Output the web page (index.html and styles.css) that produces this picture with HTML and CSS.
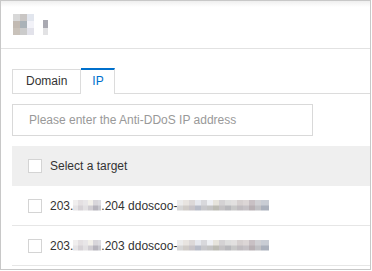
FILE: index.html
```html
<!DOCTYPE html>
<html lang="en">
<head>
    <meta charset="UTF-8">
    <meta name="viewport" content="width=device-width, initial-scale=1.0">
    <link rel="stylesheet" href="styles.css">
    <title>Select a target</title>
</head>
<body>
    <div class="panel">
        <div class="panelHead">
            <span class="titleBlur"></span><span class="titleBlurSmall"></span>
        </div>
        <div class="panelBody">
            <div class="tabs">
                <div class="tab">Domain</div>
                <div class="tab active">IP</div>
            </div>

            <input type="text" class="searchInput" placeholder="Please enter the Anti-DDoS IP address">

            <div class="targetList">
                <div class="row head">
                    <span class="check"></span>
                    <span class="label">Select a target</span>
                </div>
                <div class="row">
                    <span class="check"></span>
                    <span class="label">203.<span class="blur ipBlur"></span>.204 ddoscoo-<span class="blur nameBlur"></span></span>
                </div>
                <div class="row">
                    <span class="check"></span>
                    <span class="label">203.<span class="blur ipBlur"></span>.203 ddoscoo-<span class="blur nameBlur"></span></span>
                </div>
            </div>
        </div>
    </div>
</body>
</html>
```

FILE: styles.css
```css
body {
    margin: 0;
    background-color: white;
    font-family: "Liberation Sans", Arial, sans-serif;
    font-size: 12px;
    color: #333;
}

.panel {
    width: 369px;
    height: 268px;
    border: 1px solid #c8c8c8;
    overflow: hidden;
}

/* hlavicka s rozmazanym nazvom */
.panelHead {
    height: 48px;
    box-sizing: border-box;
    padding: 13px 12px 0;
    border-bottom: 1px solid #e2e2e2;
    background: linear-gradient(#efefef, #fff 6px);
    display: flex;
    align-items: flex-start;
}
.titleBlur {
    width: 21px;
    height: 21px;
    background:
        linear-gradient(to right, #d8d8d8 0 7px, #c9c6c4 7px 14px, #e2e6ee 14px) top / 100% 7px no-repeat,
        linear-gradient(to right, #c2bab2 0 7px, #aab2b8 7px 14px, #f2f2f8 14px) center / 100% 7px no-repeat,
        linear-gradient(to right, #c9c2ba 0 7px, #cbcbcb 7px 14px, #e2e2ea 14px) bottom / 100% 7px no-repeat;
}
.titleBlurSmall {
    width: 5px;
    height: 15px;
    margin: 6px 0 0 9px;
    background: linear-gradient(#a9a9b1 0 8px, #e2e2e4 8px);
}

.panelBody {
    padding: 19px 0 0 11px;
}

/* taby */
.tabs {
    display: flex;
    align-items: flex-end;
    border-bottom: 1px solid #dcdcdc;
}
.tab {
    height: 23px;
    line-height: 23px;
    padding: 0 13px;
    border: 1px solid #dcdcdc;
    border-bottom: none;
    color: #333;
}
.tab + .tab {
    border-left: none;
}
.tab.active {
    height: 23px;
    padding: 0 10px 0 11px;
    border-top: 2px solid #0070cc;
    margin-bottom: -1px;
    padding-bottom: 1px;
    background-color: white;
    color: #0070cc;
}

.searchInput {
    display: block;
    width: 301px;
    height: 32px;
    box-sizing: border-box;
    margin-top: 10px;
    padding: 0 16px;
    border: 1px solid #d9d9d9;
    font-family: inherit;
    font-size: 12px;
    color: #333;
    outline: none;
}
.searchInput::placeholder {
    color: #999;
}

/* zoznam cielov */
.targetList {
    margin-top: 10px;
}
.row {
    display: flex;
    align-items: center;
    height: 40px;
    box-sizing: border-box;
    padding-left: 16px;
    border-bottom: 1px solid #e6e6e6;
    white-space: nowrap;
}
.row.head {
    background-color: #efefef;
    border-bottom: none;
}
.check {
    width: 14px;
    height: 14px;
    box-sizing: border-box;
    border: 1px solid #d4d4d4;
    background-color: white;
    margin-right: 8px;
    flex-shrink: 0;
}
.label {
    color: #333;
}

.blur {
    display: inline-block;
    height: 11px;
    vertical-align: -1px;
}
.ipBlur {
    width: 28px;
    background:
        linear-gradient(to right, #f0eeee 0 5px, #e4e0e2 5px 10px, #e8e6e8 10px 15px, #f2f0ea 15px 20px, #d8d6da 20px 25px, #dcdce0 25px) top / 100% 50% no-repeat,
        linear-gradient(to right, #e6e4e6 0 5px, #d6d2d6 5px 10px, #e2e0e2 10px 15px, #d0cdd2 15px 20px, #b6b4bc 20px 25px, #c8c8ce 25px) bottom / 100% 50% no-repeat;
}
.nameBlur {
    width: 92px;
    background:
        linear-gradient(to right, #ececec 0 6px, #e8e4e0 6px 12px, #dcd8d8 12px 18px, #e6e8ee 18px 24px, #d8d8dc 24px 30px, #eef0f4 30px 36px, #e6e4dc 36px 42px, #d4d2d4 42px 48px, #dedede 48px 54px, #e2e0e0 54px 60px, #d6d0d0 60px 66px, #dcd6d6 66px 72px, #c8c0c4 72px 78px, #d0d0d4 78px 84px, #c8ccd4 84px) top / 100% 50% no-repeat,
        linear-gradient(to right, #d6d6d6 0 6px, #d0ccc8 6px 12px, #c8c4c8 12px 18px, #b8bcc8 18px 24px, #c8c8cc 24px 30px, #c4c4c4 30px 36px, #bcbcb4 36px 42px, #c4c2c4 42px 48px, #b8b8bc 48px 54px, #c8c8c8 54px 60px, #c0bcc0 60px 66px, #c6c2c6 66px 72px, #b8b0b4 72px 78px, #c0c0c4 78px 84px, #aab0bc 84px) bottom / 100% 50% no-repeat;
}
```
